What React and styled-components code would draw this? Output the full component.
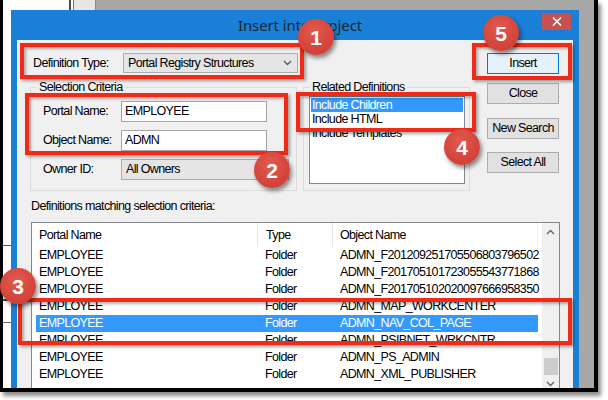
import React from 'react';
import styled, { createGlobalStyle } from 'styled-components';

const UI = `"Liberation Sans", Arial, sans-serif`;

const GlobalStyle = createGlobalStyle`
  html, body { margin: 0; padding: 0; background: #fff; }
  body { width: 608px; height: 400px; overflow: hidden; font-family: ${UI}; }
  * { box-sizing: border-box; }
`;

const uiText = `
  font-family: ${UI};
  font-size: 12.5px;
  letter-spacing: -0.65px;
  color: #000;
  white-space: nowrap;
`;

const Page = styled.div`
  position: relative;
  width: 608px;
  height: 400px;
  background: #fff;
`;

const Shot = styled.div`
  width: 598px;
  height: 392px;
  border-left: 3px solid #000;
  border-right: 4px solid #000;
  border-bottom: 4px solid #000;
  box-shadow: 3px 4px 4px rgba(0, 0, 0, 0.45);
  display: flex;
  flex-direction: column;
  overflow: hidden;
  background: #fff;
`;

const TopStrip = styled.div`
  height: 10px;
  flex: none;
  display: flex;
`;

const StripSeg = styled.div`
  width: ${(p) => (p.$grow ? 'auto' : `${p.$w}px`)};
  flex: ${(p) => (p.$grow ? 1 : 'none')};
  background: ${(p) => p.$bg};
`;

const MainRow = styled.div`
  flex: 1;
  min-height: 0;
  display: flex;
`;

const LeftStrip = styled.div`
  width: 8px;
  flex: none;
  background:
    linear-gradient(#555, #555) 0 235px / 100% 1px no-repeat,
    linear-gradient(#444, #444) 0 289px / 100% 2px no-repeat,
    linear-gradient(#666, #666) 0 312px / 100% 1px no-repeat,
    #fff;
`;

const RightStrip = styled.div`
  flex: 1;
  background: #a7a7a7;
`;

const Dialog = styled.div`
  width: 568px;
  flex: none;
  display: flex;
  flex-direction: column;
  background: #1a7fd6;
  padding: 0 6px;
`;

const TitleBar = styled.div`
  height: 30px;
  flex: none;
  display: grid;
  grid-template-columns: 1fr auto 1fr;
  align-items: start;
`;

const Title = styled.div`
  font-family: "Noto Sans", "Open Sans", sans-serif;
  font-size: 15px;
  line-height: 30px;
  color: #1d2632;
  padding-left: 10px;
  letter-spacing: -0.1px;
`;

const CloseCell = styled.div`
  display: flex;
  justify-content: flex-end;
  padding-right: 2px;
`;

const CloseBtn = styled.div`
  width: 29px;
  height: 17px;
  margin-top: 3px;
  background: #c75050;
  display: flex;
  align-items: center;
  justify-content: center;
`;

const Body = styled.div`
  flex: 1;
  min-height: 0;
  background: #f0f0f0;
  padding: 13px 14px 0 13px;
  display: flex;
  flex-direction: column;
`;

const TopArea = styled.div`
  display: flex;
  gap: 17px;
  flex: none;
`;

const LeftArea = styled.div`
  width: 440px;
  display: flex;
  flex-direction: column;
`;

const FieldRow = styled.div`
  display: flex;
  align-items: center;
  height: ${(p) => p.$h || 21}px;
  margin-top: ${(p) => p.$mt || 0}px;
`;

const Label = styled.div`
  width: ${(p) => p.$w}px;
  padding-left: ${(p) => p.$pl || 0}px;
  line-height: 13px;
  ${uiText}
`;

const Combo = styled.div`
  width: ${(p) => p.$w}px;
  height: 100%;
  border: 1px solid #acacac;
  background: #e5e5e5;
  display: flex;
  align-items: center;
  justify-content: space-between;
  padding: 0 5px 0 4px;
  line-height: 13px;
  ${uiText}
`;

const TextBox = styled.div`
  width: ${(p) => p.$w}px;
  height: 100%;
  border: 1px solid #a5a5a5;
  background: #fff;
  display: flex;
  align-items: center;
  padding-left: 3px;
  line-height: 13px;
  ${uiText}
`;

const GroupsRow = styled.div`
  display: flex;
  gap: 6px;
  margin-top: 8px;
`;

const Group = styled.fieldset`
  margin: 0;
  width: ${(p) => p.$w}px;
  height: 110px;
  min-width: 0;
  border: 1px solid #dcdcdc;
  padding: ${(p) => p.$pad};
  display: flex;
  flex-direction: column;
`;

const Legend = styled.legend`
  padding: 0 2px;
  margin-left: ${(p) => p.$ml}px;
  line-height: 13px;
  ${uiText}
`;

const ListBox = styled.div`
  width: 156px;
  height: 88px;
  border: 1px solid #828790;
  background: #fff;
  padding: 1px 1px;
  overflow: hidden;
`;

const ListItem = styled.div`
  height: 14px;
  padding-left: 1px;
  line-height: 14px;
  ${uiText}
  color: ${(p) => (p.$sel ? '#fff' : '#000')};
  background: ${(p) => (p.$sel ? '#3399ff' : 'transparent')};
`;

const ButtonCol = styled.div`
  width: 73px;
  display: flex;
  flex-direction: column;
`;

const Button = styled.div`
  height: 21px;
  margin-top: ${(p) => p.$mt || 0}px;
  border: 1px solid ${(p) => (p.$def ? '#0078d7' : '#adadad')};
  background: ${(p) => (p.$def ? '#e5f1fb' : '#e1e1e1')};
  display: flex;
  align-items: center;
  justify-content: center;
  line-height: 13px;
  ${uiText}
`;

const MatchLabel = styled.div`
  margin: 9px 0 0 1px;
  line-height: 13px;
  ${uiText}
`;

const ListView = styled.div`
  margin: 9px 0 0 1px;
  width: 529px;
  height: 171px;
  flex: none;
  border: 1px solid #828790;
  background: #fff;
  display: flex;
`;

const Table = styled.div`
  width: 509px;
  display: flex;
  flex-direction: column;
`;

const HeaderRow = styled.div`
  height: 24px;
  display: flex;
`;

const HeaderCell = styled.div`
  width: ${(p) => p.$w}px;
  padding-left: ${(p) => p.$pl}px;
  border-right: 1px solid ${(p) => (p.$last ? '#f2f2f2' : '#e5e5e5')};
  display: flex;
  align-items: center;
  line-height: 13px;
  ${uiText}
`;

const Row = styled.div`
  height: 17px;
  margin: 0 3px 0 4px;
  display: flex;
  background: ${(p) => (p.$sel ? '#3399ff' : 'transparent')};
`;

const Cell = styled.div`
  width: ${(p) => p.$w}px;
  padding-left: ${(p) => p.$pl}px;
  line-height: 17px;
  ${uiText}
  color: ${(p) => (p.$sel ? '#fff' : '#000')};
`;

const ScrollBar = styled.div`
  width: 17px;
  margin-left: auto;
  background: #f0f0f0;
  display: flex;
  flex-direction: column;
`;

const ScrollArrow = styled.div`
  height: 17px;
  flex: none;
  display: flex;
  align-items: center;
  justify-content: center;
`;

const ScrollTrack = styled.div`
  flex: 1;
  display: flex;
  flex-direction: column;
  justify-content: flex-end;
  align-items: center;
`;

const Thumb = styled.div`
  width: 14px;
  height: 17px;
  background: #cdcdcd;
`;

const RedBox = styled.div`
  position: absolute;
  left: ${(p) => p.$x}px;
  top: ${(p) => p.$y}px;
  width: ${(p) => p.$w}px;
  height: ${(p) => p.$h}px;
  border: 4px solid #f02a17;
  box-shadow: 2px 2px 3px rgba(0, 0, 0, 0.35), inset 2px 2px 3px rgba(0, 0, 0, 0.3);
  pointer-events: none;
`;

const Badge = styled.div`
  position: absolute;
  left: ${(p) => p.$cx - 18}px;
  top: ${(p) => p.$cy - 18}px;
  width: 36px;
  height: 36px;
  border-radius: 50%;
  background: radial-gradient(circle at 45% 35%, #e25a4e 0%, #d4453b 60%, #c83a31 100%);
  box-shadow: 2px 3px 4px rgba(0, 0, 0, 0.45);
  display: flex;
  align-items: center;
  justify-content: center;
  font: bold 21px/1 "Liberation Sans", Arial, sans-serif;
  color: #fff;
`;

const Chevron = ({ down = true, color = '#555' }) => (
  <svg width="9" height="6" viewBox="0 0 9 6">
    <polyline
      points={down ? '1,1 4.5,4.5 8,1' : '1,5 4.5,1.5 8,5'}
      fill="none"
      stroke={color}
      strokeWidth="1.3"
    />
  </svg>
);

const rows = [
  ['EMPLOYEE', 'Folder', 'ADMN_F201209251705506803796502'],
  ['EMPLOYEE', 'Folder', 'ADMN_F201705101723055543771868'],
  ['EMPLOYEE', 'Folder', 'ADMN_F201705102020097666958350'],
  ['EMPLOYEE', 'Folder', 'ADMN_MAP_WORKCENTER'],
  ['EMPLOYEE', 'Folder', 'ADMN_NAV_COL_PAGE'],
  ['EMPLOYEE', 'Folder', 'ADMN_PSIBNET_WRKCNTR'],
  ['EMPLOYEE', 'Folder', 'ADMN_PS_ADMIN'],
  ['EMPLOYEE', 'Folder', 'ADMN_XML_PUBLISHER'],
];

const boxes = [
  { x: 20, y: 43, w: 284, h: 36 },
  { x: 25, y: 93, w: 263, h: 62 },
  { x: 18, y: 298, w: 554, h: 47 },
  { x: 296, y: 92, w: 180, h: 40 },
  { x: 472, y: 43, w: 100, h: 37 },
];

const badges = [
  { n: 1, cx: 316, cy: 37 },
  { n: 2, cx: 272, cy: 170 },
  { n: 3, cx: 18, cy: 286 },
  { n: 4, cx: 462, cy: 147 },
  { n: 5, cx: 501, cy: 33 },
];

export default function App() {
  return (
    <>
      <GlobalStyle />
      <Page>
        <Shot>
          <TopStrip>
            <StripSeg $w={66} $bg="#fff" />
            <StripSeg $w={2} $bg="#4a4a4a" />
            <StripSeg $w={2} $bg="#fff" />
            <StripSeg $w={1} $bg="#777" />
            <StripSeg $w={21} $bg="#e6e6e6" />
            <StripSeg $w={1} $bg="#8a8a8a" />
            <StripSeg $grow $bg="#a7a7a7" />
          </TopStrip>
          <MainRow>
            <LeftStrip />
            <Dialog>
              <TitleBar>
                <span />
                <Title>Insert into Project</Title>
                <CloseCell>
                  <CloseBtn>
                    <svg width="10" height="9" viewBox="0 0 10 9">
                      <path d="M1 0.5 L9 8.5 M9 0.5 L1 8.5" stroke="#fff" strokeWidth="1.6" />
                    </svg>
                  </CloseBtn>
                </CloseCell>
              </TitleBar>
              <Body>
                <TopArea>
                  <LeftArea>
                    <FieldRow $h={20}>
                      <Label $w={93} $pl={3}>Definition Type:</Label>
                      <Combo $w={175}>
                        <span>Portal Registry Structures</span>
                        <Chevron />
                      </Combo>
                    </FieldRow>
                    <GroupsRow>
                      <Group $w={267} $pad="7px 0 0 12px">
                        <Legend $ml={-6}>Selection Criteria</Legend>
                        <FieldRow>
                          <Label $w={78}>Portal Name:</Label>
                          <TextBox $w={146}>EMPLOYEE</TextBox>
                        </FieldRow>
                        <FieldRow $mt={8}>
                          <Label $w={78}>Object Name:</Label>
                          <TextBox $w={146}>ADMN</TextBox>
                        </FieldRow>
                        <FieldRow $mt={8}>
                          <Label $w={78}>Owner ID:</Label>
                          <Combo $w={168}>
                            <span>All Owners</span>
                            <Chevron />
                          </Combo>
                        </FieldRow>
                      </Group>
                      <Group $w={167} $pad="2px 0 0 5px">
                        <Legend $ml={1}>Related Definitions</Legend>
                        <ListBox>
                          <ListItem $sel>Include Children</ListItem>
                          <ListItem>Include HTML</ListItem>
                          <ListItem>Include Templates</ListItem>
                        </ListBox>
                      </Group>
                    </GroupsRow>
                  </LeftArea>
                  <ButtonCol>
                    <Button $def>Insert</Button>
                    <Button $mt={9}>Close</Button>
                    <Button $mt={14}>New Search</Button>
                    <Button $mt={13}>Select All</Button>
                  </ButtonCol>
                </TopArea>
                <MatchLabel>Definitions matching selection criteria:</MatchLabel>
                <ListView>
                  <Table>
                    <HeaderRow>
                      <HeaderCell $w={226} $pl={7}>Portal Name</HeaderCell>
                      <HeaderCell $w={75} $pl={8}>Type</HeaderCell>
                      <HeaderCell $w={205} $pl={7} $last>Object Name</HeaderCell>
                    </HeaderRow>
                    {rows.map((r, i) => (
                      <Row key={i} $sel={i === 4}>
                        <Cell $w={222} $pl={3} $sel={i === 4}>{r[0]}</Cell>
                        <Cell $w={75} $pl={7} $sel={i === 4}>{r[1]}</Cell>
                        <Cell $w={205} $pl={7} $sel={i === 4}>{r[2]}</Cell>
                      </Row>
                    ))}
                  </Table>
                  <ScrollBar>
                    <ScrollArrow>
                      <Chevron down={false} color="#606060" />
                    </ScrollArrow>
                    <ScrollTrack>
                      <Thumb />
                    </ScrollTrack>
                    <ScrollArrow>
                      <Chevron color="#606060" />
                    </ScrollArrow>
                  </ScrollBar>
                </ListView>
              </Body>
            </Dialog>
            <RightStrip />
          </MainRow>
        </Shot>
        {boxes.map((b, i) => (
          <RedBox key={i} $x={b.x} $y={b.y} $w={b.w} $h={b.h} />
        ))}
        {badges.map((b) => (
          <Badge key={b.n} $cx={b.cx} $cy={b.cy}>
            {b.n}
          </Badge>
        ))}
      </Page>
    </>
  );
}
